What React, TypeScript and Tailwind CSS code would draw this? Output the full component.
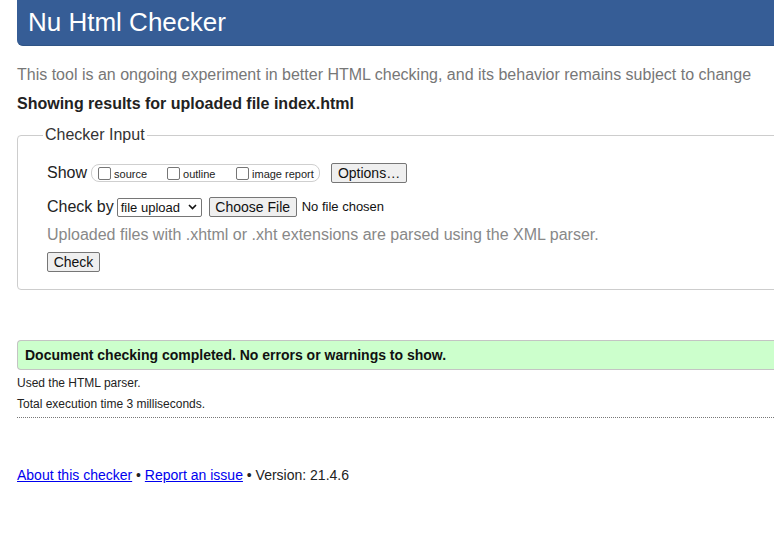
import React from 'react';

const font = { fontFamily: '"Liberation Sans", Arial, sans-serif' };

function Box() {
    return <span className="inline-block w-[13px] h-[13px] border border-[#767676] rounded-[2px] bg-white shrink-0" />;
}

function NativeButton({ label, className = '' }: { label: string; className?: string }) {
    return (
        <span
            className={`inline-flex items-center justify-center h-[20px] border border-[#767676] rounded-[2px] bg-[#efefef] text-[#111] leading-none ${className}`}
        >
            {label}
        </span>
    );
}

export default function App() {
    return (
        <div className="w-[774px] h-[534px] overflow-hidden bg-white text-[#222]" style={font}>
            <div className="w-[840px] pl-[17px]">
                {/* Banner */}
                <div className="h-[46px] bg-[#365d96] rounded-b-[6px] border-b border-[#2f5485] flex items-center pl-[11px]">
                    <h1 className="text-[26px] text-white leading-none -mt-[1px]">Nu Html Checker</h1>
                </div>

                <p className="mt-[19px] text-[16px] leading-[20px] text-[#777]">
                    This tool is an ongoing experiment in better HTML checking, and its behavior remains subject to change
                </p>
                <p className="mt-[9px] text-[16px] leading-[20px] font-bold text-[#222]">
                    Showing results for uploaded file index.html
                </p>

                {/* Checker input */}
                <fieldset className="mt-[11px] border border-[#cdcdcd] rounded-[4px] px-[29px] pb-[17px]">
                    <legend className="-ml-[4px] px-[2px] text-[16px] leading-[20px] text-[#333]">Checker Input</legend>

                    <div className="mt-[17px] h-[22px] flex items-center">
                        <span className="text-[16px] text-[#222]">Show</span>
                        <span className="ml-[4px] h-[18px] w-[229px] flex items-center border border-[#cfcfcf] rounded-[8px] pl-[6px]">
                            <span className="w-[69px] flex items-center gap-[3px]">
                                <Box />
                                <span className="text-[11px] text-[#222] mt-[3px]">source</span>
                            </span>
                            <span className="w-[69px] flex items-center gap-[3px]">
                                <Box />
                                <span className="text-[11px] text-[#222] mt-[3px]">outline</span>
                            </span>
                            <span className="flex items-center gap-[3px]">
                                <Box />
                                <span className="text-[11px] text-[#222] mt-[3px]">image report</span>
                            </span>
                        </span>
                        <NativeButton label="Options…" className="ml-[11px] w-[76px] text-[14px]" />
                    </div>

                    <div className="mt-[12px] h-[22px] flex items-center">
                        <span className="text-[16px] text-[#222]">Check by</span>
                        <span className="ml-[3px] h-[19px] w-[85px] flex items-center justify-between border border-[#767676] rounded-[2px] bg-white pl-[3px] pr-[4px]">
                            <span className="text-[13px] text-[#111] leading-none">file upload</span>
                            <svg width="9" height="6" viewBox="0 0 9 6" fill="none">
                                <path d="M1 1l3.5 3.5L8 1" stroke="#111" strokeWidth="1.6" />
                            </svg>
                        </span>
                        <NativeButton label="Choose File" className="ml-[7px] w-[88px] h-[20px] text-[14px]" />
                        <span className="ml-[5px] text-[13px] text-[#111]">No file chosen</span>
                    </div>

                    <p className="mt-[7px] text-[16px] leading-[20px] text-[#888]">
                        Uploaded files with .xhtml or .xht extensions are parsed using the XML parser.
                    </p>

                    <div className="mt-[7px] flex">
                        <NativeButton label="Check" className="w-[53px] text-[14px]" />
                    </div>
                </fieldset>

                {/* Result */}
                <div className="mt-[50px] h-[30px] flex items-center border-y border-l border-[#c4c4c4] rounded-l-[4px] bg-[#ccffcc] pl-[7px]">
                    <span className="text-[14px] font-bold text-[#111]">Document checking completed. No errors or warnings to show.</span>
                </div>

                <p className="mt-[5px] text-[12px] leading-[16px] text-[#222]">Used the HTML parser.</p>
                <p className="mt-[5px] text-[12px] leading-[16px] text-[#222]">Total execution time 3 milliseconds.</p>
                <div className="mt-[5px] border-b border-dotted border-[#777]" />

                {/* Footer */}
                <p className="mt-[48px] text-[14px] leading-[18px] text-[#222]">
                    <a className="text-[#0000ee] underline">About this checker</a> •{' '}
                    <a className="text-[#0000ee] underline">Report an issue</a> • Version: 21.4.6
                </p>
            </div>
        </div>
    );
}
